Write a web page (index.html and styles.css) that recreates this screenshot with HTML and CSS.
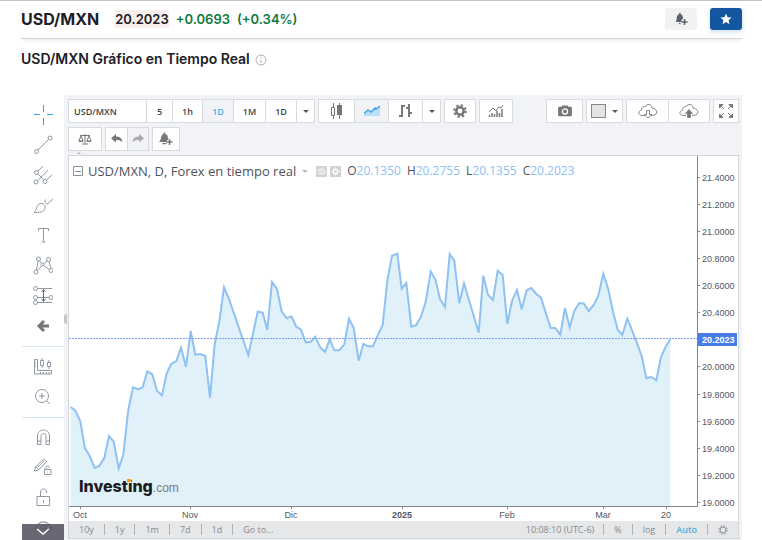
FILE: index.html
```html
<!DOCTYPE html>
<html lang="es">
<head>
    <meta charset="UTF-8">
    <meta name="viewport" content="width=device-width, initial-scale=1.0">
    <title>USD/MXN Gráfico en Tiempo Real</title>
    <link rel="stylesheet" href="styles.css">
</head>
<body>
    <header class="quote-header">
        <h1>USD/MXN</h1>
        <span class="price">20.2023</span>
        <span class="change">+0.0693</span>
        <span class="change">(+0.34%)</span>
        <button type="button" class="action alert-btn" aria-label="Crear alerta">
            <svg width="14" height="14" viewBox="0 0 14 14"><path d="M2 10C3 8 2 3 5 2.200l.5-1.400h1l.2 1.400C9 3 9 5 9 6.500L7.500 8v2zM4.500 11h2v1.300h-1z" fill="#5b606c"/><path d="M10.500 7v6M7.500 10h6" stroke="#5b606c" stroke-width="1.500"/></svg>
        </button>
        <button type="button" class="action star-btn" aria-label="Agregar a favoritos">
            <svg width="12" height="12" viewBox="0 0 12 12"><path d="M6 .5l1.600 3.700 4 .3-3 2.700.9 4L6 9.100l-3.500 2.100.9-4-3-2.700 4-.3z" fill="#fff"/></svg>
        </button>
    </header>

    <div class="chart-title">
        <h2>USD/MXN Gráfico en Tiempo Real</h2>
        <svg width="12" height="12" viewBox="0 0 12 12" fill="none" stroke="#a9acb2"><circle cx="6" cy="6" r="5"/><path d="M6 5.500v3.500M6 3v1.200"/></svg>
    </div>

    <main class="widget">
        <!-- Drawing tools -->
        <nav class="tools">
            <button type="button" class="tool active" aria-label="Cruz">
                <svg width="20" height="20" viewBox="0 0 20 20"><path d="M10.500 0v7M10.500 13v7M1 9.500h6M14 9.500h6"/></svg>
            </button>
            <button type="button" class="tool" aria-label="Línea de tendencia">
                <svg width="20" height="20" viewBox="0 0 20 20"><circle cx="3.500" cy="16.500" r="2"/><circle cx="17" cy="3" r="2"/><path d="M5 15L15.500 4.500"/></svg>
            </button>
            <button type="button" class="tool" aria-label="Tridente">
                <svg width="20" height="20" viewBox="0 0 20 20"><circle cx="3" cy="17" r="2"/><circle cx="12" cy="16.500" r="2"/><circle cx="3.500" cy="7.500" r="2"/><path d="M5 6l5-5M5 15.500L15 5M13.500 15l5.500-5M5 9l6 6"/></svg>
            </button>
            <button type="button" class="tool" aria-label="Pincel">
                <svg width="20" height="20" viewBox="0 0 20 20"><path d="M1 17.500c3-2 2-7 6-9 3-1 6 2 5 5-1 4-6 4-11 4zM12.500 4.500c-1 2 0 5 2.500 4.500M15 8.500L20 4"/></svg>
            </button>
            <button type="button" class="tool" aria-label="Texto">
                <svg width="20" height="20" viewBox="0 0 20 20"><path d="M5.500 6V3.500h10V6M10.500 3.500v13M8.500 17h4"/></svg>
            </button>
            <button type="button" class="tool" aria-label="Patrones">
                <svg width="20" height="20" viewBox="0 0 20 20"><circle cx="5.500" cy="4" r="2"/><circle cx="15.500" cy="4.500" r="2"/><circle cx="3" cy="17" r="2"/><circle cx="18" cy="15.500" r="2"/><circle cx="9.500" cy="9.500" r="1.500"/><path d="M5 6L3.500 15M6.500 5.500l2 3M10.500 9L14 6M16 6.500l2 7M4.500 15.500L8.500 11M10.500 10.500l6 4"/></svg>
            </button>
            <button type="button" class="tool" aria-label="Predicción">
                <svg width="20" height="20" viewBox="0 0 20 20"><circle cx="2.500" cy="3.500" r="2"/><circle cx="2.500" cy="12.500" r="2"/><circle cx="18" cy="12.500" r="2"/><circle cx="2.500" cy="17.500" r="2"/><path d="M4.500 3.500H19M4.500 12.500H16M4.500 17.500H19"/><path d="M10.500 5v11M8.500 7l2-2.500 2 2.500M8.500 14l2 2.500 2-2.500" class="dark"/></svg>
            </button>
            <button type="button" class="tool" aria-label="Atrás">
                <svg width="20" height="20" viewBox="0 0 20 20"><path d="M11 6l-5 5 5 5M6 11h10" class="arrow"/></svg>
            </button>
            <hr>
            <button type="button" class="tool" aria-label="Medir">
                <svg width="20" height="20" viewBox="0 0 20 20"><path d="M1.500 3.500h3v11h14v3.500h-17zM7.500 18v-2M10.500 18v-2M13.500 18v-2M16 18v-2M7.500 4.500h3v5h-3zM9 2v2.500M9 9.500V12M14.500 6.500h3v4h-3zM16 4v2.500M16 10.500V13M1.500 7h1.500M1.500 10h1.500"/></svg>
            </button>
            <button type="button" class="tool" aria-label="Acercar">
                <svg width="20" height="20" viewBox="0 0 20 20"><circle cx="9" cy="10" r="6.500"/><path d="M9 7v6M6 10h6M13.500 14.500l3.500 3.500"/></svg>
            </button>
            <hr>
            <button type="button" class="tool" aria-label="Imán">
                <svg width="20" height="20" viewBox="0 0 20 20"><path d="M4.500 17.500V9c0-8 12-8 12 0v8.500h-3.500V9.500c0-4-5-4-5 0v8zM4.500 14h3.500M13 14h3.500"/></svg>
            </button>
            <button type="button" class="tool" aria-label="Modo dibujo">
                <svg width="20" height="20" viewBox="0 0 20 20"><path d="M1.500 14l1-4L10.500 2l3 2.500L5.500 13zM3 10l2.500 2.500M5 10l6-6M11.500 12.500h6.500v5h-6.500zM13 12.500v-1.500c0-2.500 3.500-2.500 3.500 0M14.500 14.500v1"/></svg>
            </button>
            <button type="button" class="tool" aria-label="Bloquear">
                <svg width="20" height="20" viewBox="0 0 20 20"><path d="M4 9.500h12.500v9H4zM7.500 9.500V5c0-4 6-4 6 0v1M10.500 13v3"/></svg>
            </button>
            <button type="button" class="tool" aria-label="Ocultar dibujos">
                <svg width="20" height="20" viewBox="0 0 20 20"><path d="M3 11c2-8 13-8 15 0-2 6-13 6-15 0z" class="dark"/><circle cx="10.500" cy="10" r="2.500" class="dark"/></svg>
            </button>
            <button type="button" class="scroll-down" aria-label="Más herramientas">
                <svg width="14" height="8" viewBox="0 0 14 8"><path d="M1 1l6 5 6-5" fill="none" stroke="#fff" stroke-width="1.500"/></svg>
            </button>
        </nav>

        <section class="panel">
            <button type="button" class="handle" aria-label="Contraer barra"></button>

            <div class="toolbar">
                <div class="group">
                    <input type="text" class="symbol" value="USD/MXN" aria-label="Símbolo">
                    <button type="button" class="w26">5</button>
                    <button type="button" class="w30">1h</button>
                    <button type="button" class="w31 selected">1D</button>
                    <button type="button" class="w32">1M</button>
                    <button type="button" class="w31">1D</button>
                    <button type="button" class="w18" aria-label="Más intervalos"><i class="caret"></i></button>
                </div>
                <div class="group">
                    <button type="button" class="w35" aria-label="Velas">
                        <svg width="14" height="18" viewBox="0 0 14 18"><path d="M3.500 1v4M3.500 14v3M1.500 5.500h3v8h-3z" fill="none" stroke="#777"/><path d="M9.500 1v16" stroke="#777"/><path d="M7 3h5v10H7z" fill="#777"/></svg>
                    </button>
                    <button type="button" class="w34 selected" aria-label="Área">
                        <svg width="16" height="12" viewBox="0 0 16 12"><path d="M0 8l4-3 3 2 4-4 1 1 4-3v10H0z" fill="#b9def5"/><path d="M0 8.500l4-3.500 3 2 4-4 1 1 4-3" fill="none" stroke="#41a9e0" stroke-width="1.500"/></svg>
                    </button>
                    <button type="button" class="w34" aria-label="Barras">
                        <svg width="16" height="16" viewBox="0 0 16 16"><path d="M4 2v12M1 13h3M4 3h3M11 1v13M8 5h3M11 10h3" fill="none" stroke="#777" stroke-width="2"/></svg>
                    </button>
                    <button type="button" class="w18" aria-label="Más estilos"><i class="caret"></i></button>
                </div>
                <div class="group">
                    <button type="button" class="w30" aria-label="Propiedades">
                        <svg width="14" height="14" viewBox="0 0 14 14" fill="none" stroke="#777"><circle cx="7" cy="7" r="3.700" stroke-width="2.500"/><circle cx="7" cy="7" r="5.800" stroke-width="2" stroke-dasharray="2.300 2.255"/></svg>
                    </button>
                </div>
                <div class="group">
                    <button type="button" class="w32" aria-label="Indicadores">
                        <svg width="16" height="14" viewBox="0 0 16 14" fill="none" stroke="#777"><path d="M1.500 11v2M4 9v4M6.500 10v3M9 7v6M11.500 9v4M14 5v8" stroke-width="1.500"/><path d="M1 8l4-4 3 3 3-4 2 1 2-3"/></svg>
                    </button>
                </div>
                <div class="group push">
                    <button type="button" class="w35" aria-label="Captura">
                        <svg width="16" height="12" viewBox="0 0 18 14"><path d="M2 2h3l1-1.500h6L13 2h3q1 0 1 1v9q0 1-1 1H2q-1 0-1-1V3q0-1 1-1z" fill="#777"/><circle cx="9" cy="7.500" r="3" fill="#777" stroke="#fff" stroke-width="1.500"/></svg>
                    </button>
                </div>
                <div class="group">
                    <button type="button" class="w35" aria-label="Diseño"><i class="swatch"></i><i class="caret"></i></button>
                </div>
                <div class="group">
                    <button type="button" class="w41" aria-label="Cargar">
                        <svg width="20" height="16" viewBox="0 0 20 16" fill="none" stroke="#888"><path d="M7 12.500H4C0 12 0 8 3.500 7 3 4 6 3 7 4c2-4 7-3 7 1 3 0 6 3 4 6q-1 1.500-5 1.500"/><path d="M8.500 7.500h3v4h2L10 15l-3.500-3.500h2z"/></svg>
                    </button>
                    <button type="button" class="w41" aria-label="Guardar">
                        <svg width="20" height="16" viewBox="0 0 20 16" fill="none" stroke="#888"><path d="M7 12.500H4C0 12 0 8 3.500 7 3 4 6 3 7 4c2-4 7-3 7 1 3 0 6 3 4 6q-1 1.500-5 1.500"/><path d="M8.500 14.500h3v-4h2L10 6.500l-3.500 4h2z" fill="#777"/></svg>
                    </button>
                </div>
                <div class="group">
                    <button type="button" class="w24" aria-label="Pantalla completa">
                        <svg width="14" height="14" viewBox="0 0 14 14" fill="#777" stroke="#777"><path d="M.5 4V.5H4zM10 .5h3.500V4zM.5 10v3.500H4zM10 13.500h3.500V10zM2 2l3 3M12 2L9 5M2 12l3-3M12 12L9 9"/></svg>
                    </button>
                </div>
            </div>

            <div class="toolbar">
                <div class="group">
                    <button type="button" class="w32" aria-label="Comparar">
                        <svg width="14" height="12" viewBox="0 0 14 12" fill="none" stroke="#777"><path d="M7 1v9.500M4 11h6M2 2.500h10M3 3L.8 8h4.400zM11 3L8.800 8h4.400zM1 8.500h4M9 8.500h4"/></svg>
                    </button>
                </div>
                <div class="group">
                    <button type="button" class="w21" aria-label="Deshacer">
                        <svg width="12" height="10" viewBox="0 0 12 10"><path d="M5 0v2.500c4 0 6 2 6.500 6C10 6.500 8 6 5 6v2.500L0 4.200z" fill="#777"/></svg>
                    </button>
                    <button type="button" class="w21 selected" aria-label="Rehacer">
                        <svg width="12" height="10" viewBox="0 0 12 10"><path d="M7 0v2.500C3 2.500 1 4.500.5 8.500 2 6.500 4 6 7 6v2.500l5-4.300z" fill="#aaa"/></svg>
                    </button>
                </div>
                <div class="group">
                    <button type="button" class="w26" aria-label="Alerta">
                        <svg width="16" height="14" viewBox="0 0 16 14"><path d="M1 10c3-2 1-7 4.500-8L6 .5h1L7.500 2c3 1 2 4 3 6H9v2zM4.500 11h4v1.200h-4z" fill="#777"/><path d="M11.500 7v6M8.500 10h6" stroke="#777" stroke-width="1.500"/></svg>
                    </button>
                </div>
            </div>

            <div class="chart">
                <button type="button" class="tab" aria-label="Ocultar barra"></button>
                <div class="legend">
                    <svg width="10" height="10" viewBox="0 0 10 10" fill="none" stroke="#8d9096"><path d="M.5.5h9v9h-9zM2 5.500h6"/></svg>
                    <span class="name">USD/MXN, D, Forex en tiempo real</span>
                    <i class="caret light"></i>
                    <span class="chips">
                        <svg width="11" height="11" viewBox="0 0 11 11"><path d="M0 0h11v11H0z" fill="#d3d3d3"/><ellipse cx="5.500" cy="5.500" rx="3.500" ry="2.500" fill="none" stroke="#fff"/><circle cx="5.500" cy="5.500" r="1" fill="#fff"/></svg>
                        <svg width="11" height="11" viewBox="0 0 11 11"><path d="M0 0h11v11H0z" fill="#d3d3d3"/><circle cx="5.500" cy="5.500" r="2.200" fill="none" stroke="#fff" stroke-width="1.500"/><path d="M5.500 1.500v1M5.500 8.500v1M1.500 5.500h1M8.500 5.500h1" stroke="#fff"/></svg>
                    </span>
                    <span class="ohlc">O<b>20.1350</b></span>
                    <span class="ohlc">H<b>20.2755</b></span>
                    <span class="ohlc">L<b>20.1355</b></span>
                    <span class="ohlc">C<b>20.2023</b></span>
                </div>

                <svg class="plot" viewBox="69 156 669 365" role="img" aria-label="USD/MXN">
                    <path class="area" d="M70.500 407L75.300 410.500 80.300 421 84.800 448 89.700 456 94.700 468 99.300 466 104.300 458 109 436 113.700 441.700 118.700 468.300 123.300 454.700 128.300 410 133 387.300 138 389.300 142.700 387.300 147.300 371.300 152.300 374.300 157 390.700 162 395.300 166.700 373.300 171.300 364 176.300 361 181 347.700 186 366.700 190.700 331 195.300 354.700 200.300 354 205.300 356 210 397.700 214.700 344 219.300 321.700 224 287.300 229 299 248.300 355 252.700 335 257.700 311.700 262.700 312.700 267.300 330 272 282 277 289 281.700 311.700 286.700 318.300 291.300 316.300 296.300 326.700 301 329.700 305.700 342.300 310.700 341.700 315.300 336.700 320 347 325 352 329.700 339.300 334.300 350.300 339.300 350.300 344.300 344.300 349 318.700 353.700 328 358.700 360.700 363.300 344 368 346.300 373 346.300 377.700 335.300 382.700 325 387.300 280.700 392 255.700 397.300 253.700 401.700 288.700 406.300 283 411.300 326.700 416 325.300 421 316.700 425.700 301.700 430.700 271.700 435.300 279.300 440 299 445 307 449.700 254 454.300 260.700 459.300 303.300 464 283.300 469 300 478.700 332.700 483.300 275.700 488 294.700 493 300 497.700 270.700 502.700 275 507.300 324 512 300.700 517 290 521.700 309.300 526.700 290.300 531.300 288 536.300 294 541 297.700 545.700 312.700 550.700 328 555.300 328 560.300 334.700 565 308 569.700 327.300 574.300 311 579.300 303 584 303.700 588.700 311 593.700 305 598.300 295.700 603.300 273.700 608.300 289.300 613 311.700 617.700 329.700 622.300 335 627.300 318.700 632 330 641.700 356 646.300 378 651.300 377 656.300 380.300 661 357 665.700 346.700 670.300 339.300V506H70.500z"/>
                    <path class="line" d="M70.500 407L75.300 410.500 80.300 421 84.800 448 89.700 456 94.700 468 99.300 466 104.300 458 109 436 113.700 441.700 118.700 468.300 123.300 454.700 128.300 410 133 387.300 138 389.300 142.700 387.300 147.300 371.300 152.300 374.300 157 390.700 162 395.300 166.700 373.300 171.300 364 176.300 361 181 347.700 186 366.700 190.700 331 195.300 354.700 200.300 354 205.300 356 210 397.700 214.700 344 219.300 321.700 224 287.300 229 299 248.300 355 252.700 335 257.700 311.700 262.700 312.700 267.300 330 272 282 277 289 281.700 311.700 286.700 318.300 291.300 316.300 296.300 326.700 301 329.700 305.700 342.300 310.700 341.700 315.300 336.700 320 347 325 352 329.700 339.300 334.300 350.300 339.300 350.300 344.300 344.300 349 318.700 353.700 328 358.700 360.700 363.300 344 368 346.300 373 346.300 377.700 335.300 382.700 325 387.300 280.700 392 255.700 397.300 253.700 401.700 288.700 406.300 283 411.300 326.700 416 325.300 421 316.700 425.700 301.700 430.700 271.700 435.300 279.300 440 299 445 307 449.700 254 454.300 260.700 459.300 303.300 464 283.300 469 300 478.700 332.700 483.300 275.700 488 294.700 493 300 497.700 270.700 502.700 275 507.300 324 512 300.700 517 290 521.700 309.300 526.700 290.300 531.300 288 536.300 294 541 297.700 545.700 312.700 550.700 328 555.300 328 560.300 334.700 565 308 569.700 327.300 574.300 311 579.300 303 584 303.700 588.700 311 593.700 305 598.300 295.700 603.300 273.700 608.300 289.300 613 311.700 617.700 329.700 622.300 335 627.300 318.700 632 330 641.700 356 646.300 378 651.300 377 656.300 380.300 661 357 665.700 346.700 670.300 339.300"/>
                    <path class="last" d="M69 338.500H697"/>
                    <path class="axis" d="M697.500 156V506.500M69 506.500H698M697 177.500h3M697 204.500h3M697 231.500h3M697 258.500h3M697 285.500h3M697 312.500h3M697 366.500h3M697 394.500h3M697 421.500h3M697 448.500h3M697 475.500h3M697 502.500h3M80.500 507v2M190.500 507v2M291.500 507v2M402.500 507v2M507.500 507v2M603.500 507v2M666.500 507v2"/>
                    <g class="scale">
                        <text x="702" y="181">21.4000</text>
                        <text x="702" y="208">21.2000</text>
                        <text x="702" y="235">21.0000</text>
                        <text x="702" y="262">20.8000</text>
                        <text x="702" y="289">20.6000</text>
                        <text x="702" y="316">20.4000</text>
                        <text x="702" y="370">20.0000</text>
                        <text x="702" y="398">19.8000</text>
                        <text x="702" y="425">19.6000</text>
                        <text x="702" y="452">19.4000</text>
                        <text x="702" y="479">19.2000</text>
                        <text x="702" y="506">19.0000</text>
                    </g>
                    <rect x="698" y="333" width="39" height="13" fill="#4a7de4"/>
                    <text class="last-label" x="702" y="343">20.2023</text>
                    <g class="scale months">
                        <text x="80" y="518">Oct</text>
                        <text x="190" y="518">Nov</text>
                        <text x="291" y="518">Dic</text>
                        <text x="402" y="518" class="year">2025</text>
                        <text x="507" y="518">Feb</text>
                        <text x="603" y="518">Mar</text>
                        <text x="666" y="518">20</text>
                    </g>
                    <text class="logo" x="79" y="492">Investing<tspan class="logo-com">.com</tspan></text>
                    <rect x="127" y="479" width="4" height="3" fill="#f19c1f"/>
                </svg>
            </div>

            <footer class="ranges">
                <button type="button">10y</button>
                <button type="button">1y</button>
                <button type="button">1m</button>
                <button type="button">7d</button>
                <button type="button">1d</button>
                <button type="button">Go to...</button>
                <span class="clock">10:08:10 (UTC-6)</span>
                <button type="button">%</button>
                <button type="button">log</button>
                <button type="button" class="on">Auto</button>
                <button type="button" class="gear" aria-label="Ajustes">
                    <svg width="10" height="10" viewBox="0 0 10 10" fill="none" stroke="#8a8d94"><circle cx="5" cy="5" r="3"/><circle cx="5" cy="5" r="4.200" stroke-dasharray="1.650 1.650"/></svg>
                </button>
            </footer>
        </section>
    </main>
</body>
</html>
```

FILE: styles.css
```css
* {
    box-sizing: border-box;
}
body {
    margin: 0;
    height: 100vh;
    padding: 0 20px 0 21px;
    display: flex;
    flex-direction: column;
    overflow: hidden;
    background: #fff;
    border-top: 1px solid #bfc3c9;
    font-family: Inter, "Liberation Sans", sans-serif;
    color: #1d2025;
}
button {
    margin: 0;
    padding: 0;
    border: 0;
    background: none;
    font: inherit;
    color: inherit;
    display: flex;
    align-items: center;
    justify-content: center;
    cursor: pointer;
}
svg {
    display: block;
    flex: none;
}

/* Header */
.quote-header {
    height: 38px;
    flex: none;
    display: flex;
    align-items: center;
    gap: 7px;
    padding-bottom: 1px;
    border-bottom: 1px solid #d3d4d6;
    box-shadow: 0 3px 4px -2px #e6e3e3;
    font-size: 13px;
    font-weight: 600;
}
h1 {
    margin: 0 9px 0 0;
    font-size: 16px;
    font-weight: 700;
}
.price {
    background: #f6efec;
    line-height: 18px;
}
.change {
    color: #0f7a3c;
}
.action {
    width: 32px;
    height: 22px;
    border-radius: 3px;
}
.alert-btn {
    margin-left: auto;
    margin-right: 6px;
    background: #f2f2f2;
}
.star-btn {
    background: #14569f;
    box-shadow: 0 2px 5px #cfe0f0;
}
.chart-title {
    height: 56px;
    flex: none;
    display: flex;
    gap: 5px;
    padding-top: 11px;
}
.chart-title svg {
    margin-top: 4px;
}
h2 {
    margin: 0;
    font-size: 14px;
    line-height: 17px;
    font-weight: 600;
}

/* Widget */
.widget {
    flex: 1;
    min-height: 0;
    display: flex;
    font-family: "Open Sans", "Noto Sans", sans-serif;
}
.tools {
    width: 43px;
    flex: none;
    padding: 5px 0 0 1px;
    position: relative;
    overflow: hidden;
}
.tool {
    width: 100%;
    height: 30px;
}
.tool svg {
    fill: none;
    stroke: #8f98a5;
}
.tool.active svg {
    stroke: #2fa4e7;
}
.tool .dark {
    stroke: #666b73;
}
.tool .arrow {
    stroke: #777;
    stroke-width: 3;
}
.tools hr {
    margin: 6px 0 4px;
    border: 0;
    border-top: 1px solid #d3e6f5;
}
.scroll-down {
    position: absolute;
    left: 1px;
    right: 0;
    bottom: 0;
    height: 16px;
    background: rgba(76, 78, 90, 0.85);
}
.panel {
    flex: 1;
    min-width: 0;
    display: flex;
    flex-direction: column;
    position: relative;
    padding: 4px 3px 1px 4px;
    background: #f1f3f6;
}
.handle {
    position: absolute;
    left: 0;
    top: 219px;
    width: 3px;
    height: 10px;
    background: #c5c8cc;
    border-radius: 3px 0 0 3px;
}

/* Toolbars */
.toolbar {
    flex: none;
    display: flex;
    gap: 3px;
    height: 24px;
    margin-bottom: 4px;
    font-size: 9px;
    font-weight: 600;
    color: #3f434a;
}
.group {
    display: flex;
    border: 1px solid #d7dbe0;
    background: #fff;
}
.group > * + * {
    border-left: 1px solid #d7dbe0;
}
.push {
    margin-left: auto;
}
.symbol {
    width: 77px;
    padding: 0 5px;
    border: 0;
    outline: 0;
    background: none;
    font: inherit;
    color: inherit;
}
.selected {
    background: #f1f3f6;
    color: #49aee3;
}
.w18 { width: 18px; }
.w21 { width: 21px; }
.w24 { width: 24px; }
.w26 { width: 26px; }
.w30 { width: 30px; }
.w31 { width: 31px; }
.w32 { width: 32px; }
.w34 { width: 34px; }
.w35 { width: 35px; }
.w41 { width: 41px; }
.caret {
    border: 3px solid transparent;
    border-top-color: #555;
    border-bottom: 0;
}
.caret.light {
    border-top-color: #b5b8bd;
}
.swatch {
    width: 15px;
    height: 14px;
    margin-right: 6px;
    border: 1px solid #888;
    background: #e3e3e3;
}

/* Chart */
.chart {
    flex: 1;
    min-height: 0;
    position: relative;
    border: 1px solid #d3d7dc;
    border-bottom: 0;
    background: #fff;
}
.plot {
    width: 100%;
    height: 100%;
}
.tab {
    position: absolute;
    left: 8px;
    top: -4px;
    border: 2px solid transparent;
    border-bottom-color: #b5b8bd;
    border-top: 0;
}
.legend {
    position: absolute;
    left: 4px;
    top: 6px;
    display: flex;
    align-items: center;
    color: #50535a;
    font-size: 12px;
    line-height: 18px;
}
.name {
    margin: 0 6px 0 5px;
    font-size: 13px;
}
.chips {
    display: flex;
    gap: 3px;
    margin-left: 8px;
}
.ohlc {
    margin-left: 6px;
}
.ohlc b {
    font-weight: 400;
    color: #8dc1f0;
}
.area {
    fill: #e1f1fa;
}
.line {
    fill: none;
    stroke: #8fc2f1;
    stroke-width: 2;
}
.last {
    stroke: #7ba4f0;
    stroke-dasharray: 2 1;
}
.axis {
    fill: none;
    stroke: #85878c;
}
.scale,
.last-label {
    font-family: "Liberation Sans", Arial, sans-serif;
    font-size: 9px;
    fill: #55585e;
}
.months {
    text-anchor: middle;
}
.year {
    font-weight: 700;
}
.last-label {
    fill: #fff;
    font-weight: 700;
}
.logo {
    font: 800 16px Inter, sans-serif;
    fill: #1b1c1e;
}
.logo-com {
    font: 400 12px "Liberation Sans", Arial, sans-serif;
    fill: #77797d;
}

/* Bottom bar */
.ranges {
    height: 18px;
    flex: none;
    display: flex;
    align-items: center;
    padding: 0;
    border: 1px solid #d3d7dc;
    border-top: 0;
    background: #e6e7e9;
    color: #85888f;
    font-size: 9px;
}
.ranges button {
    height: 11px;
    padding: 0 10px;
}
.ranges button + button,
.clock + button {
    border-left: 1px solid #aeb1b6;
}
.clock {
    margin-left: auto;
    padding-right: 9px;
}
.ranges .on {
    color: #49aee3;
    font-weight: 600;
}
```
